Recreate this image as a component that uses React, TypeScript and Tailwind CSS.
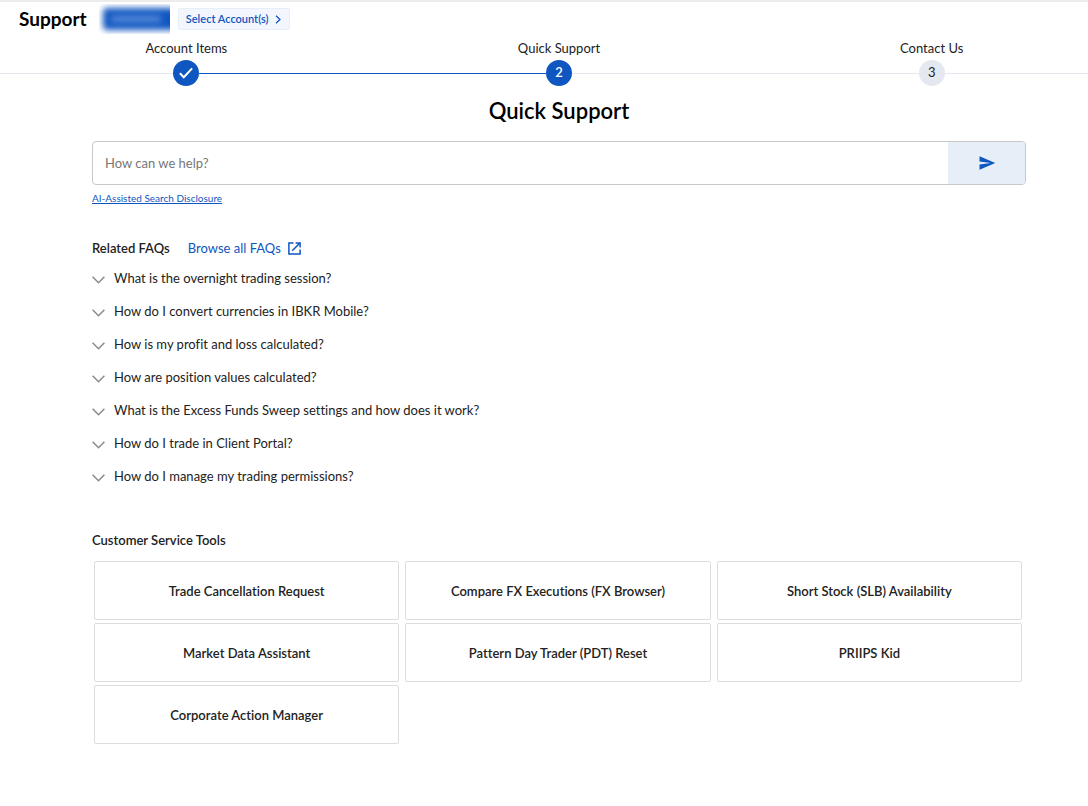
import React, { useState } from 'react';
import { MdSend } from 'react-icons/md';

interface Step {
  label: string;
  state: 'done' | 'current' | 'upcoming';
}

const steps: Step[] = [
  { label: 'Account Items', state: 'done' },
  { label: 'Quick Support', state: 'current' },
  { label: 'Contact Us', state: 'upcoming' },
];

const faqs = [
  'What is the overnight trading session?',
  'How do I convert currencies in IBKR Mobile?',
  'How is my profit and loss calculated?',
  'How are position values calculated?',
  'What is the Excess Funds Sweep settings and how does it work?',
  'How do I trade in Client Portal?',
  'How do I manage my trading permissions?',
];

const tools = [
  'Trade Cancellation Request',
  'Compare FX Executions (FX Browser)',
  'Short Stock (SLB) Availability',
  'Market Data Assistant',
  'Pattern Day Trader (PDT) Reset',
  'PRIIPS Kid',
  'Corporate Action Manager',
];

const ChevronDown = () => (
  <svg viewBox="0 0 13 8" fill="none" stroke="currentColor" strokeWidth="1.5" className="mt-[3px] h-2 w-[13px] text-[#8a8a8a]" aria-hidden="true">
    <path d="M0.6 0.8 6.5 6.8 12.4 0.8" />
  </svg>
);

const Check = () => (
  <svg viewBox="0 0 14 12" fill="none" stroke="currentColor" strokeWidth="2" className="h-3 w-[14px]" aria-hidden="true">
    <path d="M0.9 6.2 4.8 10.2 13.1 1.4" />
  </svg>
);

const ExternalLink = () => (
  <svg viewBox="0 0 13 13" fill="none" stroke="currentColor" strokeWidth="1.5" className="size-[13px]" aria-hidden="true">
    <path d="M5.5 0.9H0.9V12.1H12.1V7.5" />
    <path d="M7.6 0.9H12.1V5.4" />
    <path d="M12 1 4.2 8.8" />
  </svg>
);

const Header = () => (
  <header className="flex h-9 items-center border-t-2 border-[#ececec] pl-[19px]">
    <h1 className="text-[19px] leading-6 font-bold text-black">Support</h1>
    {/* Masked account number */}
    <div className="ml-3 flex h-[30px] w-[71px] items-center overflow-hidden pl-1">
      <div className="flex h-[22px] w-20 shrink-0 items-center rounded bg-[#0f56c0] pl-2 blur-[3px]">
        <div className="h-[6px] w-[50px] bg-[#5f8fdb] blur-[1px]" />
      </div>
    </div>
    <button className="ml-2 flex h-[22px] w-28 items-center justify-center gap-[7px] rounded-xs border border-[#e6eefa] bg-[#f3f7fd] text-[11px] font-semibold text-[#0f56c0]">
      Select Account(s)
      <svg viewBox="0 0 6 10" fill="none" stroke="currentColor" strokeWidth="1.4" className="h-[9px] w-[6px]" aria-hidden="true">
        <path d="M0.8 0.8 5.2 5 0.8 9.2" />
      </svg>
    </button>
  </header>
);

const Stepper = () => (
  <ol className="mt-[2px] grid grid-cols-3">
    {steps.map((step, i) => (
      <li key={step.label} className="flex flex-col items-center">
        <span className="text-[13px] leading-5 text-[#222]">{step.label}</span>
        <div className="mt-[2px] flex w-full items-center">
          <div className={i === 1 ? 'h-px flex-1 bg-[#0f56c0]' : 'h-px flex-1 bg-[#e3e8ee]'} />
          <span
            className={
              step.state === 'upcoming'
                ? 'flex size-[26px] items-center justify-center rounded-full bg-[#e4e8f0] text-[13px] text-[#222]'
                : 'flex size-[26px] items-center justify-center rounded-full bg-[#0f56c0] text-[13px] font-semibold text-white'
            }
          >
            {step.state === 'done' ? <Check /> : i + 1}
          </span>
          <div className={i === 0 ? 'h-px flex-1 bg-[#0f56c0]' : 'h-px flex-1 bg-[#e3e8ee]'} />
        </div>
      </li>
    ))}
  </ol>
);

const SearchForm = () => {
  const [query, setQuery] = useState('');

  return (
    <form
      onSubmit={(e) => e.preventDefault()}
      className="mt-4 flex h-11 overflow-hidden rounded border border-[#c8c8c8]"
    >
      <input
        type="text"
        aria-label="How can we help?"
        value={query}
        onChange={(e) => setQuery(e.target.value)}
        placeholder="How can we help?"
        className="min-w-0 flex-1 px-3 text-[13px] text-[#222] outline-none placeholder:text-[#777]"
      />
      <button type="submit" aria-label="Send" className="flex w-[77px] items-center justify-center bg-[#e6eef8] text-[#0f56c0]">
        <MdSend size={18} />
      </button>
    </form>
  );
};

export default function App() {
  return (
    <div className="overflow-x-hidden bg-white font-['Lato','Liberation_Sans',sans-serif] [font-variant-ligatures:none]">
      <Header />
      <div className="mr-[-30px]">
        <Stepper />
        <main className="px-[92px] pb-[60px] text-[13px] leading-5 text-[#222]">
          <h2 className="mt-[11px] text-center text-[22px] leading-7 font-semibold text-black">Quick Support</h2>
          <SearchForm />
          <a href="#disclosure" className="mt-[3px] block w-fit text-[10px] leading-5 text-[#0f56c0] underline">
            AI-Assisted Search Disclosure
          </a>

          <section className="mt-[30px]">
            <div className="flex items-center gap-[18px]">
              <h3 className="font-semibold">Related FAQs</h3>
              <a href="#faqs" className="flex items-center gap-[7px] text-[#0f56c0]">
                Browse all FAQs
                <ExternalLink />
              </a>
            </div>
            <ul className="mt-[10px] flex flex-col gap-[13px]">
              {faqs.map((faq) => (
                <li key={faq}>
                  <button className="flex items-center gap-[9px] text-left">
                    <ChevronDown />
                    {faq}
                  </button>
                </li>
              ))}
            </ul>
          </section>

          <section className="mt-11">
            <h3 className="font-semibold">Customer Service Tools</h3>
            <div className="mt-[11px] grid grid-cols-3 gap-x-[6px] gap-y-[3px] pr-1 pl-[2px]">
              {tools.map((tool) => (
                <button key={tool} className="h-[59px] rounded-xs border border-[#ddd] font-semibold">
                  {tool}
                </button>
              ))}
            </div>
          </section>
        </main>
      </div>
    </div>
  );
}
